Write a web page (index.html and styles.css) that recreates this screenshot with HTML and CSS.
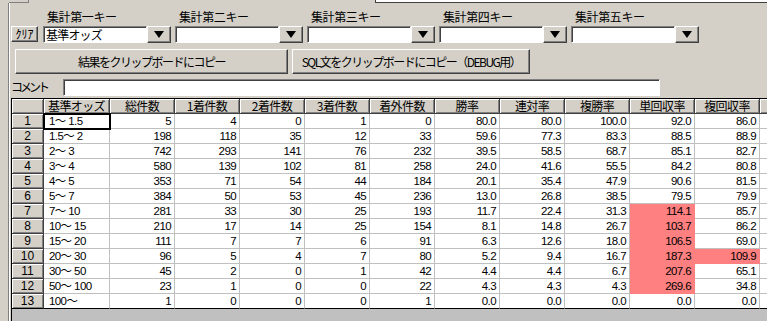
FILE: index.html
```html
<!DOCTYPE html>
<html lang="ja">
<head>
    <meta charset="UTF-8">
    <title>集計</title>
    <link rel="stylesheet" href="styles.css">
</head>
<body>
    <div class="topbar">
        <div class="stub stub-left"></div>
        <div class="stub stub-right"></div>
    </div>

    <div class="panel">
        <div class="keys">
            <div class="keys-spacer"></div>
            <span class="key-label">集計第一キー</span>
            <span class="key-label">集計第二キー</span>
            <span class="key-label">集計第三キー</span>
            <span class="key-label">集計第四キー</span>
            <span class="key-label">集計第五キー</span>
        </div>

        <div class="combos">
            <button class="btn btn-clear">ｸﾘｱ</button>
            <div class="combo"><div class="field combo-field">基準オッズ</div><div class="btn combo-btn"><span class="arrow"></span></div></div>
            <div class="combo"><div class="field combo-field"></div><div class="btn combo-btn"><span class="arrow"></span></div></div>
            <div class="combo"><div class="field combo-field"></div><div class="btn combo-btn"><span class="arrow"></span></div></div>
            <div class="combo"><div class="field combo-field"></div><div class="btn combo-btn"><span class="arrow"></span></div></div>
            <div class="combo"><div class="field combo-field"></div><div class="btn combo-btn"><span class="arrow"></span></div></div>
        </div>

        <div class="actions">
            <button class="btn btn-copy">結果をクリップボードにコピー</button>
            <button class="btn btn-sql">SQL文をクリップボードにコピー（DEBUG用）</button>
        </div>

        <div class="comment-row">
            <label class="comment-label">コメント</label>
            <div class="field comment-field"></div>
        </div>

        <div class="grid-wrap">
            <table class="grid">
                <thead>
                    <tr>
                        <th class="w-row"></th>
                        <th class="w-first">基準オッズ</th>
                        <th>総件数</th>
                        <th>1着件数</th>
                        <th>2着件数</th>
                        <th>3着件数</th>
                        <th>着外件数</th>
                        <th>勝率</th>
                        <th>連対率</th>
                        <th>複勝率</th>
                        <th>単回収率</th>
                        <th>複回収率</th>
                        <th class="w-rest"></th>
                    </tr>
                </thead>
                <tbody>
                    <tr><th>1</th><td class="odds current">1～ 1.5</td><td>5</td><td>4</td><td>0</td><td>1</td><td>0</td><td>80.0</td><td>80.0</td><td>100.0</td><td>92.0</td><td>86.0</td><td></td></tr>
                    <tr><th>2</th><td class="odds">1.5～ 2</td><td>198</td><td>118</td><td>35</td><td>12</td><td>33</td><td>59.6</td><td>77.3</td><td>83.3</td><td>88.5</td><td>88.9</td><td></td></tr>
                    <tr><th>3</th><td class="odds">2～ 3</td><td>742</td><td>293</td><td>141</td><td>76</td><td>232</td><td>39.5</td><td>58.5</td><td>68.7</td><td>85.1</td><td>82.7</td><td></td></tr>
                    <tr><th>4</th><td class="odds">3～ 4</td><td>580</td><td>139</td><td>102</td><td>81</td><td>258</td><td>24.0</td><td>41.6</td><td>55.5</td><td>84.2</td><td>80.8</td><td></td></tr>
                    <tr><th>5</th><td class="odds">4～ 5</td><td>353</td><td>71</td><td>54</td><td>44</td><td>184</td><td>20.1</td><td>35.4</td><td>47.9</td><td>90.6</td><td>81.5</td><td></td></tr>
                    <tr><th>6</th><td class="odds">5～ 7</td><td>384</td><td>50</td><td>53</td><td>45</td><td>236</td><td>13.0</td><td>26.8</td><td>38.5</td><td>79.5</td><td>79.9</td><td></td></tr>
                    <tr><th>7</th><td class="odds">7～ 10</td><td>281</td><td>33</td><td>30</td><td>25</td><td>193</td><td>11.7</td><td>22.4</td><td>31.3</td><td class="hit">114.1</td><td>85.7</td><td></td></tr>
                    <tr><th>8</th><td class="odds">10～ 15</td><td>210</td><td>17</td><td>14</td><td>25</td><td>154</td><td>8.1</td><td>14.8</td><td>26.7</td><td class="hit">103.7</td><td>86.2</td><td></td></tr>
                    <tr><th>9</th><td class="odds">15～ 20</td><td>111</td><td>7</td><td>7</td><td>6</td><td>91</td><td>6.3</td><td>12.6</td><td>18.0</td><td class="hit">106.5</td><td>69.0</td><td></td></tr>
                    <tr><th>10</th><td class="odds">20～ 30</td><td>96</td><td>5</td><td>4</td><td>7</td><td>80</td><td>5.2</td><td>9.4</td><td>16.7</td><td class="hit">187.3</td><td class="hit">109.9</td><td></td></tr>
                    <tr><th>11</th><td class="odds">30～ 50</td><td>45</td><td>2</td><td>0</td><td>1</td><td>42</td><td>4.4</td><td>4.4</td><td>6.7</td><td class="hit">207.6</td><td>65.1</td><td></td></tr>
                    <tr><th>12</th><td class="odds">50～ 100</td><td>23</td><td>1</td><td>0</td><td>0</td><td>22</td><td>4.3</td><td>4.3</td><td>4.3</td><td class="hit">269.6</td><td>34.8</td><td></td></tr>
                    <tr class="last"><th>13</th><td class="odds">100～</td><td>1</td><td>0</td><td>0</td><td>0</td><td>1</td><td>0.0</td><td>0.0</td><td>0.0</td><td>0.0</td><td>0.0</td><td></td></tr>
                </tbody>
            </table>
        </div>
    </div>
</body>
</html>
```

FILE: styles.css
```css
html, body { margin: 0; padding: 0; }
body { width: 767px; height: 321px; overflow: hidden; background: #d4d0c8; font-family: "Noto Sans CJK JP", "Liberation Sans", sans-serif; font-size: 12px; color: #000; }

.topbar { display: flex; height: 3px; }
.stub { box-sizing: border-box; height: 3px; }
.stub-left { margin-left: 9px; width: 20px; border-right: 1px solid #808080; border-bottom: 1px solid #808080; }
.stub-right { margin-left: auto; width: 392px; background: #fff; border-left: 1px solid #404040; border-bottom: 1px solid #404040; }

.panel { margin-left: 8px; border-left: 1px solid #808080; box-shadow: inset 1px 0 #fff; padding-left: 2px; height: 318px; display: flex; flex-direction: column; }

.btn { box-sizing: border-box; background: #d4d0c8; border: 1px solid; border-color: #fff #404040 #404040 #fff; box-shadow: inset -1px -1px #808080; font: inherit; color: #000; padding: 0; margin: 0; }
.field { box-sizing: border-box; background: #fff; border: 1px solid; border-color: #808080 #fff #fff #808080; box-shadow: inset 1px 1px #404040; }

.keys { display: flex; gap: 4px; margin-top: 6px; height: 16px; line-height: 16px; }
.keys-spacer { width: 27px; margin-right: 1px; }
.key-label { width: 128px; box-sizing: border-box; padding-left: 4px; letter-spacing: -0.4px; }

.combos { display: flex; gap: 4px; margin-top: 1px; height: 17px; }
.btn-clear { width: 27px; height: 16px; margin-right: 1px; line-height: 14px; }
.combo { display: flex; width: 128px; }
.combo-field { width: 104px; height: 17px; padding-left: 2px; line-height: 15px; letter-spacing: -0.8px; }
.combo-btn { width: 24px; height: 17px; display: flex; align-items: center; justify-content: center; }
.arrow { width: 0; height: 0; border-left: 5px solid transparent; border-right: 5px solid transparent; border-top: 7px solid #000; }

.actions { display: flex; gap: 4px; margin-top: 6px; padding-left: 4px; }
.btn-copy { width: 273px; height: 25px; letter-spacing: -1.5px; }
.btn-sql { width: 238px; height: 25px; letter-spacing: -1.5px; }

.comment-row { display: flex; margin-top: 5px; height: 17px; }
.comment-label { width: 52px; line-height: 15px; letter-spacing: -3px; }
.comment-field { width: 597px; height: 17px; }

.grid-wrap { margin-top: 2px; flex: 1; overflow: hidden; background: #c0c0c0; border-top: 1px solid #000; border-left: 1px solid #000; }
.grid { border-collapse: separate; border-spacing: 0; table-layout: fixed; width: 808px; }
.grid th, .grid td { box-sizing: border-box; padding: 0; height: 15px; line-height: 14px; white-space: nowrap; }
.grid thead th { width: 65px; letter-spacing: -0.6px; }
.grid thead th.w-row { width: 32px; }
.grid thead th.w-first { width: 66px; }
.grid thead th.w-rest { width: 60px; }
.grid th { background: #d4d0c8; font-weight: normal; text-align: center; border-right: 1px solid #404040; border-bottom: 1px solid #404040; box-shadow: inset 1px 1px #fff, inset -1px -1px #808080; }
.grid tbody th { font-family: "Liberation Sans", "Noto Sans CJK JP", sans-serif; }
.grid td { font-family: "Liberation Sans", "Noto Sans CJK JP", sans-serif; font-size: 11.5px; background: #fff; text-align: right; padding-right: 3px; border-right: 1px solid #c0c0c0; border-bottom: 1px solid #c0c0c0; letter-spacing: -0.6px; }
.grid td.odds { text-align: left; padding-left: 5px; padding-right: 0; }
.grid td.current { outline: 2px solid #000; outline-offset: -1px; }
.grid td.hit { background: #ff8080; border-color: #ff8080; }
.grid tr.last th, .grid tr.last td { border-bottom-color: #000; }
```
